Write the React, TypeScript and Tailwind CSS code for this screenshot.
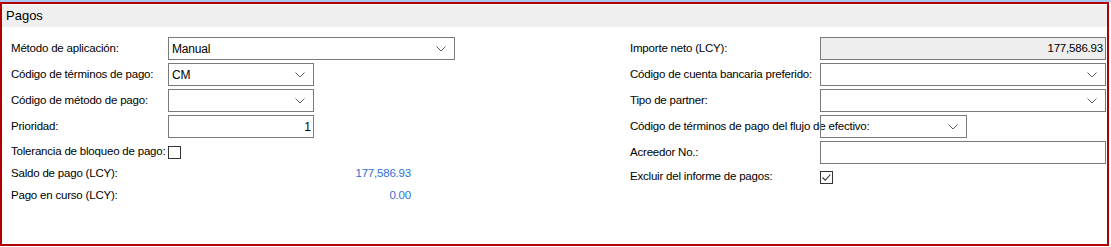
import React from 'react'

function Chevron() {
  return (
    <svg width="10" height="6" viewBox="0 0 10 6" className="shrink-0">
      <path d="M0.5 0.5 L5 5 L9.5 0.5" fill="none" stroke="#606060" strokeWidth="1" />
    </svg>
  )
}

function Select({ width, value }: { width: string; value?: string }) {
  return (
    <div className={`${width} h-[23px] border border-[#7a7a7a] flex items-center justify-between pl-[3px] pr-[8px] shrink-0`}>
      <span className="text-[12px] tracking-[-0.2px] text-black">{value ?? ''}</span>
      <Chevron />
    </div>
  )
}

function Label({ children, width }: { children: React.ReactNode; width: string }) {
  return (
    <div className={`${width} shrink-0 whitespace-nowrap text-[11.5px] tracking-[-0.2px] text-black`}>{children}</div>
  )
}

function CheckBox({ checked }: { checked?: boolean }) {
  return (
    <div className="w-[13px] h-[13px] border border-[#333333] bg-white flex items-center justify-center shrink-0">
      {checked && (
        <svg width="11" height="11" viewBox="0 0 11 11">
          <path d="M1.5 5.5 L4.2 8.2 L9.5 2.5" fill="none" stroke="#333333" strokeWidth="1.1" />
        </svg>
      )}
    </div>
  )
}

export default function App() {
  return (
    <div className="w-[1111px] h-[247px] bg-white" style={{ fontFamily: '"Liberation Sans", Arial, sans-serif' }}>
      <div className="h-[2px] bg-[#a9c8ee]" />
      <div className="w-[1109px] h-[244px] border-2 border-[#b30000] flex flex-col">
        <div className="h-[22px] bg-[#efefef] flex items-center pl-[4px] mt-[1px]">
          <span className="text-[13px] text-black">Pagos</span>
        </div>
        <div className="flex pl-[9px] pt-[10px]">
          {/* left column */}
          <div className="w-[619px] shrink-0 flex flex-col gap-[3px]">
            <div className="flex items-center h-[23px]">
              <Label width="w-[157px]">Método de aplicación:</Label>
              <Select width="w-[287px]" value="Manual" />
            </div>
            <div className="flex items-center h-[23px]">
              <Label width="w-[157px]">Código de términos de pago:</Label>
              <Select width="w-[146px]" value="CM" />
            </div>
            <div className="flex items-center h-[23px]">
              <Label width="w-[157px]">Código de método de pago:</Label>
              <Select width="w-[146px]" />
            </div>
            <div className="flex items-center h-[23px]">
              <Label width="w-[157px]">Prioridad:</Label>
              <div className="w-[146px] h-[23px] border border-[#7a7a7a] flex items-center justify-end pr-[2px] text-[12px] text-black">
                1
              </div>
            </div>
            <div className="flex items-center h-[18px] mt-[2px]">
              <Label width="w-[157px]">Tolerancia de bloqueo de pago:</Label>
              <CheckBox />
            </div>
            <div className="flex items-center h-[18px] mt-[1px]">
              <Label width="w-[157px]">Saldo de pago (LCY):</Label>
              <div className="w-[243px] text-right text-[11.5px] tracking-[-0.2px] text-[#2f6fd3]">177,586.93</div>
            </div>
            <div className="flex items-center h-[18px] mt-[1px]">
              <Label width="w-[157px]">Pago en curso (LCY):</Label>
              <div className="w-[243px] text-right text-[11.5px] tracking-[-0.2px] text-[#2f6fd3]">0.00</div>
            </div>
          </div>
          {/* right column */}
          <div className="flex flex-col gap-[3px]">
            <div className="flex items-center h-[23px]">
              <Label width="w-[190px]">Importe neto (LCY):</Label>
              <div className="w-[286px] h-[23px] border border-[#7a7a7a] bg-[#eeeeee] flex items-center justify-end pr-[2px] text-[11.5px] tracking-[-0.2px] text-black">
                177,586.93
              </div>
            </div>
            <div className="flex items-center h-[23px]">
              <Label width="w-[190px]">Código de cuenta bancaria preferido:</Label>
              <Select width="w-[286px]" />
            </div>
            <div className="flex items-center h-[23px]">
              <Label width="w-[190px]">Tipo de partner:</Label>
              <Select width="w-[286px]" />
            </div>
            <div className="flex items-center h-[23px]">
              <Label width="w-[190px]">Código de términos de pago del flujo de efectivo:</Label>
              <Select width="w-[147px]" />
            </div>
            <div className="flex items-center h-[23px]">
              <Label width="w-[190px]">Acreedor No.:</Label>
              <div className="w-[286px] h-[23px] border border-[#7a7a7a]" />
            </div>
            <div className="flex items-center h-[18px] mt-[1px]">
              <Label width="w-[190px]">Excluir del informe de pagos:</Label>
              <CheckBox checked />
            </div>
          </div>
        </div>
      </div>
    </div>
  )
}
